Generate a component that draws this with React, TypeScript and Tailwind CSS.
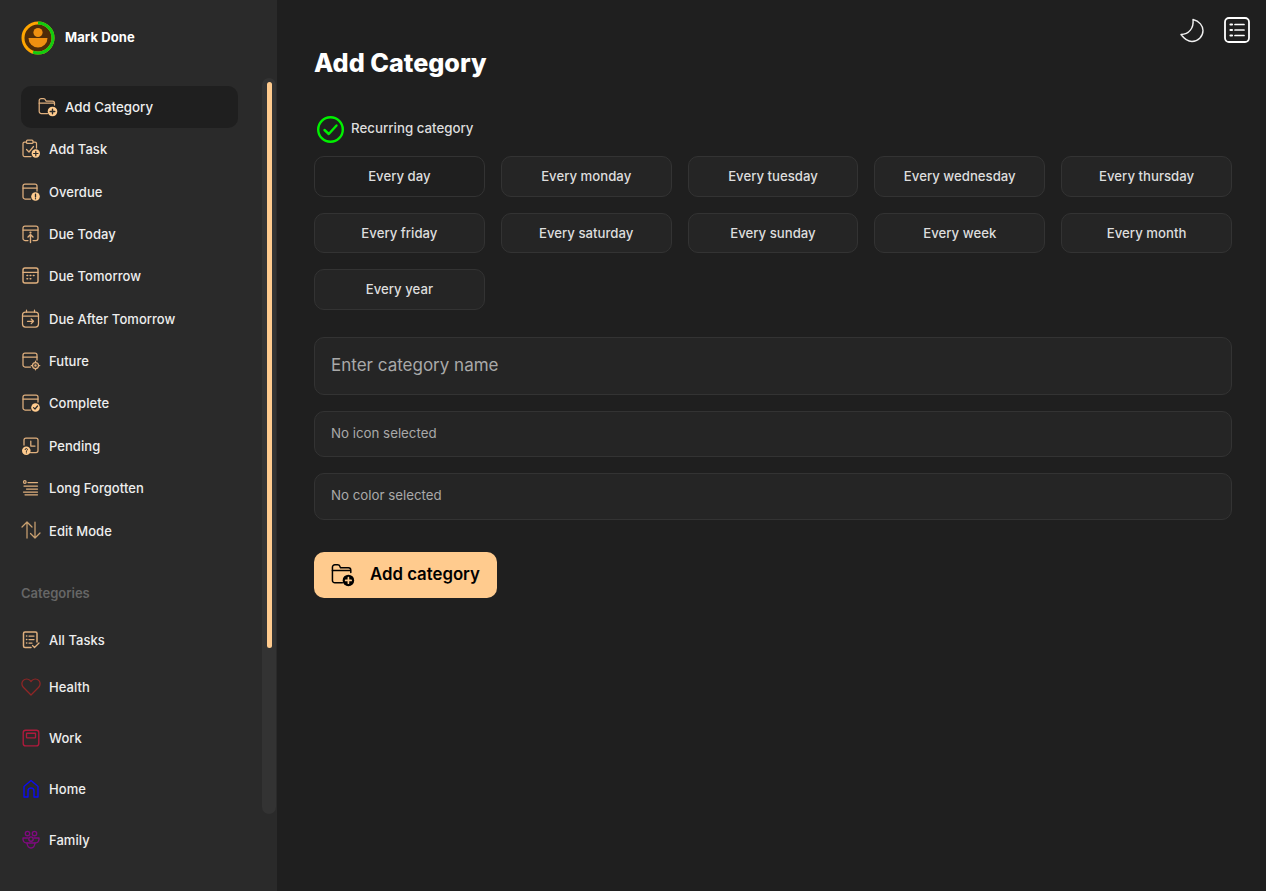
import React from "react";

const T = "#e0b07e";
const A = "#ffcb8e";
const font = { fontFamily: "Inter, 'Liberation Sans', sans-serif" };

type IconProps = { c?: string; fill?: string };
const Svg = ({ children, size = 20, c = T }: { children: React.ReactNode; size?: number; c?: string }) => (
  <svg width={size} height={size} viewBox="0 0 20 20" fill="none" stroke={c} strokeWidth="1.25" strokeLinecap="round" strokeLinejoin="round" className="shrink-0">
    {children}
  </svg>
);

const FolderPlus = ({ c = T, fill = A, size = 20 }: IconProps & { size?: number }) => (
  <svg width={size} height={size} viewBox="0 0 20 20" fill="none" stroke={c} strokeWidth="1.25" strokeLinecap="round" strokeLinejoin="round" className="shrink-0">
    <path d="M9.5 16.5H3.5A2 2 0 0 1 1.2 14.5V3.5A2 2 0 0 1 3.2 1.5H5.5Q7 1.5 7.5 3L8 4H14.5A2 2 0 0 1 16.5 6V8" />
    <path d="M1.2 6.2H16" />
    <circle cx="14.5" cy="14.5" r="4.8" fill={fill} stroke="none" />
    <path d="M14.5 12.2V16.8M12.2 14.5H16.8" stroke={c === "#000" ? "#ffcb8e" : "#2a2a2a"} strokeWidth="1.4" />
  </svg>
);
const TaskPlus = () => (
  <Svg>
    <path d="M10 17.5H3.5A1.5 1.5 0 0 1 2 16V4.5A1.5 1.5 0 0 1 3.5 3H14A1.5 1.5 0 0 1 15.5 4.5V9" />
    <rect x="5.5" y="1.2" width="6.5" height="3.2" rx="1" fill="#2a2a2a" />
    <path d="M5.5 10.5L8 13L12.5 7.5" />
    <circle cx="14.8" cy="14.5" r="4.2" fill={A} stroke="none" />
    <path d="M14.8 12.3V16.7M12.6 14.5H17" stroke="#2a2a2a" strokeWidth="1.2" />
  </Svg>
);
const Overdue = () => (
  <Svg>
    <path d="M9.5 17H4A2 2 0 0 1 2 15V4A2 2 0 0 1 4 2H14A2 2 0 0 1 16 4V9" />
    <path d="M2 6H16" />
    <circle cx="14.5" cy="14.5" r="4.3" fill={A} stroke="none" />
    <path d="M14.5 12.2V15M14.5 16.6V16.8" stroke="#2a2a2a" strokeWidth="1.3" />
  </Svg>
);
const DueToday = () => (
  <Svg>
    <path d="M7 16.5H4A2 2 0 0 1 2 14.5V4A2 2 0 0 1 4 2H15A2 2 0 0 1 17 4V14.5A2 2 0 0 1 15 16.5H12" />
    <path d="M2 6H17" />
    <path d="M9.5 18.5V11M7 13L9.5 10.5L12 13" strokeWidth="1.4" />
    <circle cx="9.5" cy="8.5" r="0.5" fill={T} />
  </Svg>
);
const DueTomorrow = () => (
  <Svg>
    <rect x="2" y="2" width="15" height="15" rx="2" strokeWidth="1.4" />
    <path d="M2 6.3H17" />
    <path d="M6 9.5H6.6M9.2 9.5H9.8M12.4 9.5H13M6 12.8H6.6M9.2 12.8H9.8" strokeWidth="1.6" />
  </Svg>
);
const DueAfter = () => (
  <Svg>
    <rect x="1.5" y="3" width="16" height="15" rx="3" />
    <path d="M1.5 7H17.5M5.5 1.2V3M13.5 1.2V3" />
    <path d="M6.5 12.3H12.5M10.2 10L12.5 12.3L10.2 14.6" strokeWidth="1.3" />
  </Svg>
);
const Future = () => (
  <Svg>
    <path d="M9.5 16H4A2 2 0 0 1 2 14V4A2 2 0 0 1 4 2H14A2 2 0 0 1 16 4V9" />
    <path d="M2 6H16" />
    <circle cx="14.5" cy="14.5" r="3" />
    <circle cx="14.5" cy="14.5" r="0.6" fill={T} />
    <path d="M14.5 10.2V11.5M14.5 17.5V18.8M10.2 14.5H11.5M17.5 14.5H18.8" />
  </Svg>
);
const Complete = () => (
  <Svg>
    <path d="M9.5 17H4A2 2 0 0 1 2 15V4A2 2 0 0 1 4 2H15A2 2 0 0 1 17 4V9" />
    <path d="M2 6H17" />
    <circle cx="14.5" cy="14.5" r="4.3" fill={A} stroke="none" />
    <path d="M12.5 14.6L14 16L16.5 13" stroke="#2a2a2a" strokeWidth="1.2" />
  </Svg>
);
const Pending = () => (
  <Svg>
    <path d="M3 9V4A2 2 0 0 1 5 2H15A2 2 0 0 1 17 4V14.5A2 2 0 0 1 15 16.5H9.5" />
    <path d="M9.8 5V10H14" />
    <circle cx="5.3" cy="14.8" r="4.3" fill={A} stroke="none" />
    <path d="M4.1 13.6Q4.3 12.4 5.4 12.5Q6.6 12.7 6.4 13.8Q6.1 14.5 5.4 15V15.4M5.4 16.8V17" stroke="#2a2a2a" strokeWidth="1" />
  </Svg>
);
const LongForgotten = () => (
  <Svg>
    <circle cx="3.8" cy="4" r="1.3" />
    <path d="M7 4.5H16.5M3 8H16.5M5.5 11H16.5M2.5 14H16.5M4 16.8H16.5" strokeWidth="1.25" />
  </Svg>
);
const EditMode = () => (
  <Svg c="#c9a070">
    <path d="M6 18V2M1 7L6 2L11 7" />
    <path d="M14 2V18M9.5 13.5L14 18L19 13" />
  </Svg>
);
const AllTasks = () => (
  <Svg>
    <path d="M10 17.5H4A1.5 1.5 0 0 1 2.5 16V3.5A1.5 1.5 0 0 1 4 2H14.5A1.5 1.5 0 0 1 16 3.5V12" strokeWidth="1.5" />
    <path d="M5.5 6H5.8M5.5 9.5H5.8M5.5 13H5.8" strokeWidth="1.5" />
    <path d="M8 6H13M8 9.5H13M8 13H11" />
    <path d="M11.5 15.5L13.5 17.5L18 13" />
  </Svg>
);
const Heart = () => (
  <Svg c="#8f2626">
    <path d="M10 18L2.3 10.2A4.8 4.8 0 0 1 2.3 3.4A4.8 4.8 0 0 1 9 3.4L10 4.5L11 3.4A4.8 4.8 0 0 1 17.7 3.4A4.8 4.8 0 0 1 17.7 10.2Z" strokeWidth="1.3" />
  </Svg>
);
const Work = () => (
  <Svg c="#b01a3c">
    <rect x="2.2" y="2.2" width="15.6" height="15.6" rx="2.4" strokeWidth="1.35" />
    <rect x="5.5" y="5.2" width="9" height="4.6" rx="0.5" strokeWidth="1.35" />
  </Svg>
);
const Home = () => (
  <Svg c="#0c0cf0">
    <path d="M3 18H7V12A3 3 0 0 1 13 12V18H17V7.5L10 1.5L3 7.5Z" strokeWidth="1.4" />
  </Svg>
);
const Family = () => (
  <Svg c="#800a80">
    <circle cx="6.5" cy="3.5" r="2.2" strokeWidth="1.35" />
    <circle cx="13.5" cy="3.5" r="2.2" strokeWidth="1.35" />
    <circle cx="10" cy="9" r="2.2" strokeWidth="1.35" />
    <path d="M6.8 8H2V9.5A4 4 0 0 0 6 13H14A4 4 0 0 0 18 9.5V8H13.2" strokeWidth="1.35" />
    <path d="M6 13Q6.5 18 10 18Q13.5 18 14 13" strokeWidth="1.35" />
  </Svg>
);

const Avatar = () => (
  <svg width="34" height="34" viewBox="0 0 34 34" className="shrink-0">
    <circle cx="17" cy="17" r="13.5" fill="#4f2c08" />
    <circle cx="17" cy="11.5" r="4.6" fill="#f09010" />
    <path d="M7.5 17H26.5A9.5 9.5 0 0 1 7.5 17Z" fill="#f09010" />
    <circle cx="17" cy="17" r="15" fill="none" stroke="#ffa500" strokeWidth="3" />
    <path d="M17 2A15 15 0 0 1 17 32A15 15 0 0 1 12 31.2" fill="none" stroke="#10cc10" strokeWidth="3" />
  </svg>
);

const nav: [string, React.ReactNode][] = [
  ["Add Task", <TaskPlus />],
  ["Overdue", <Overdue />],
  ["Due Today", <DueToday />],
  ["Due Tomorrow", <DueTomorrow />],
  ["Due After Tomorrow", <DueAfter />],
  ["Future", <Future />],
  ["Complete", <Complete />],
  ["Pending", <Pending />],
  ["Long Forgotten", <LongForgotten />],
  ["Edit Mode", <EditMode />],
];

const cats: [string, React.ReactNode][] = [
  ["Health", <Heart />],
  ["Work", <Work />],
  ["Home", <Home />],
  ["Family", <Family />],
];

const days = [
  "Every day", "Every monday", "Every tuesday", "Every wednesday", "Every thursday",
  "Every friday", "Every saturday", "Every sunday", "Every week", "Every month", "Every year",
];

export default function App() {
  return (
    <div style={font} className="flex h-screen w-full overflow-hidden bg-[#1f1f1f] text-white">
      <aside className="relative flex w-[277px] shrink-0 flex-col bg-[#2a2a2a] pl-[21px]">
        <div className="flex h-[86px] items-center gap-[10px] pb-[11px]">
          <Avatar />
          <span className="text-[13px] font-bold tracking-[0.1px]">Mark Done</span>
        </div>
        <div className="flex h-[42px] w-[217px] items-center gap-[7px] rounded-[10px] bg-[#1f1f1f] pl-[17px] text-[13.3px] font-medium text-[#eeeeee]">
          <FolderPlus />
          <span className="pt-[2px]">Add Category</span>
        </div>
        {nav.map(([label, icon]) => (
          <div key={label} className="flex h-[42.35px] items-center gap-[8px] text-[13px] font-medium tracking-[0.05px] text-[#eeeeee]">
            {icon}
            <span className="pt-[2px]">{label}</span>
          </div>
        ))}
        <div className="mt-[32px] flex h-[20px] items-center text-[13px] font-semibold text-[#666666]">Categories</div>
        <div className="mt-[15px] flex h-[43px] items-center gap-[8px] text-[13px] font-medium tracking-[0.05px] text-[#eeeeee]">
          <AllTasks />
          <span className="pt-[2px]">All Tasks</span>
        </div>
        {cats.map(([label, icon]) => (
          <div key={label} className="flex h-[51px] items-center gap-[8px] text-[13px] font-medium tracking-[0.05px] text-[#eeeeee]">
            {icon}
            <span className="pt-[2px]">{label}</span>
          </div>
        ))}
        <div className="absolute left-[262px] top-[78px] h-[736px] w-[14px] rounded-[7px] bg-[#333333]">
          <div className="mx-auto mt-[4px] h-[566px] w-[5px] rounded-[3px] bg-[#ffcb8e]" />
        </div>
      </aside>
      <main className="relative flex-1 pl-[37px] pr-[34px] pt-[45px]">
        <div className="absolute right-[16px] top-[17px] flex items-center gap-[20px]">
          <svg width="25" height="25" viewBox="0 0 25 25" fill="none" stroke="#f0f0f0" strokeWidth="1.4" strokeLinejoin="round" className="shrink-0">
            <path d="M14 1.5C20.5 3 24 8 24 12.5C24 18.5 19 23.5 13 23.5C8.5 23.5 5 20.5 2 16.5C10 16.5 15 10 14 1.5Z" />
          </svg>
          <svg width="26" height="26" viewBox="0 0 26 26" fill="none" stroke="#ffffff" className="shrink-0">
            <rect x="1" y="1" width="24" height="24" rx="4" strokeWidth="1.8" />
            <path d="M6.5 7.5H8M6.5 13H8M6.5 18.5H8" strokeWidth="2.2" strokeLinecap="round" />
            <path d="M11 7.5H20M11 13H20M11 18.5H20" strokeWidth="1.7" strokeLinecap="round" />
          </svg>
        </div>
        <h1 className="h-[36px] text-[25.2px] font-extrabold leading-[36px]">Add Category</h1>
        <div className="mt-[32px] flex h-[32px] items-center gap-[6px] pl-[2px] text-[13.3px] font-medium text-[#dddddd]">
          <svg width="29" height="29" viewBox="0 0 29 29" fill="none" stroke="#00f000" strokeLinecap="round" strokeLinejoin="round" className="shrink-0">
            <circle cx="14.5" cy="14.5" r="12.3" strokeWidth="2.4" />
            <path d="M8.5 15L12.8 19L20.5 10.5" strokeWidth="2.4" />
          </svg>
          Recurring category
        </div>
        <div className="mt-[11px] grid grid-cols-5 gap-x-[16px] gap-y-[16px]">
          {days.map((d, i) => (
            <div
              key={d}
              className={`flex h-[40.5px] items-center justify-center rounded-[10px] border border-[#333333] pt-[2px] text-[13.2px] font-medium text-[#dddddd] ${i === 0 ? "bg-[#1f1f1f]" : "bg-[#252525]"}`}
            >
              {d}
            </div>
          ))}
        </div>
        <div className="mt-[27px] flex h-[58px] items-center rounded-[10px] border border-[#333333] bg-[#252525] px-[16px] text-[17px] text-[#a9a9a9]">
          Enter category name
        </div>
        <div className="mt-[16px] flex h-[46px] items-center rounded-[10px] border border-[#333333] bg-[#252525] px-[16px] text-[13.3px] text-[#a9a9a9]">
          No icon selected
        </div>
        <div className="mt-[16px] flex h-[47px] items-center rounded-[10px] border border-[#333333] bg-[#252525] px-[16px] text-[13.3px] text-[#a9a9a9]">
          No color selected
        </div>
        <button className="mt-[32px] flex h-[46px] w-[183px] items-center gap-[15px] rounded-[10px] bg-[#ffcb8e] pl-[17px] text-[16.8px] font-semibold text-black">
          <FolderPlus c="#000" fill="#000" size={24} />
          Add category
        </button>
      </main>
    </div>
  );
}
